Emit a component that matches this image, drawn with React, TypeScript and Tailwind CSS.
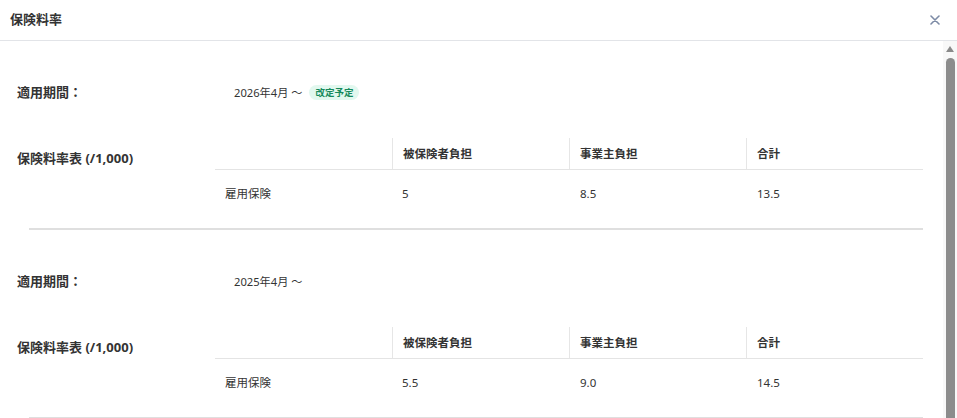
import React from "react";

const rows = [
  { period: "2026年4月 〜", badge: true, emp: "5", er: "8.5", total: "13.5" },
  { period: "2025年4月 〜", badge: false, emp: "5.5", er: "9.0", total: "14.5" },
];

function Section({ period, badge, emp, er, total }: (typeof rows)[number]) {
  return (
    <div className="pt-[42px]">
      <div className="flex items-center h-[20px]">
        <div className="w-[217px] text-[13px] font-bold text-[#333]">適用期間：</div>
        <div className="flex items-center text-[11.2px] text-[#333]">
          <span>{period}</span>
          {badge && (
            <span className="ml-[7px] h-[15px] px-[6px] rounded-full bg-[#e2f8ef] text-[#178a5c] text-[9.5px] font-bold flex items-center leading-none">
              改定予定
            </span>
          )}
        </div>
      </div>
      <div className="flex mt-[35px]">
        <div className="w-[198px] pt-[10px] h-[20px] leading-[20px] text-[13px] font-bold text-[#333] box-content">
          保険料率表 (/1,000)
        </div>
        <div className="flex-1">
          <div className="grid grid-cols-4 h-[32px] border-b border-[#e4e4e4] text-[11.5px] font-bold text-[#333]">
            <div></div>
            <div className="border-l border-[#e6e6e6] pl-[10px] flex items-center">被保険者負担</div>
            <div className="border-l border-[#e6e6e6] pl-[10px] flex items-center">事業主負担</div>
            <div className="border-l border-[#e6e6e6] pl-[10px] flex items-center">合計</div>
          </div>
          <div className="grid grid-cols-4 h-[48px] text-[11.5px] text-[#333]">
            <div className="pl-[10px] flex items-center">雇用保険</div>
            <div className="pl-[10px] flex items-center">{emp}</div>
            <div className="pl-[11px] flex items-center">{er}</div>
            <div className="pl-[11px] flex items-center">{total}</div>
          </div>
        </div>
      </div>
      <div className="ml-[12px] mt-[10px] h-[2px] bg-[#dfdfdf]"></div>
    </div>
  );
}

export default function App() {
  return (
    <div
      className="w-full h-[418px] overflow-hidden bg-white flex flex-col"
      style={{ fontFamily: '"Noto Sans", "Noto Sans CJK JP", sans-serif' }}
    >
      <div className="h-[41px] shrink-0 border-b border-[#e2e4e8] flex items-center justify-between pl-[10px] pr-[17px]">
        <div className="text-[13px] font-bold text-[#333]">保険料率</div>
        <svg width="10" height="10" viewBox="0 0 10 10" className="text-[#7d8ba6]">
          <path d="M1 1L9 9M9 1L1 9" stroke="currentColor" strokeWidth="1.6" strokeLinecap="round" />
        </svg>
      </div>
      <div className="flex flex-1 min-h-0">
        <div className="flex-1 pl-[17px] pr-[20px]">
          {rows.map((r) => (
            <Section key={r.period} {...r} />
          ))}
        </div>
        <div className="w-[14px] bg-[#f8f8f8] flex flex-col items-center pt-[5px]">
          <div className="w-0 h-0 border-l-[4.5px] border-r-[4.5px] border-b-[6px] border-l-transparent border-r-transparent border-b-[#8a8a8a]"></div>
          <div className="mt-[6px] w-[9px] flex-1 rounded-t-[5px] bg-[#8c8c8c]"></div>
        </div>
      </div>
    </div>
  );
}
